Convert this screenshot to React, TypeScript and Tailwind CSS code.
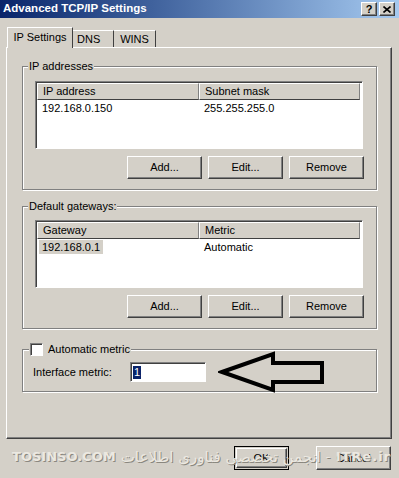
import React from "react";

const raised =
  "border border-t-white border-l-white border-r-[#404040] border-b-[#404040] shadow-[inset_-1px_-1px_0_#808080]";
const sunken =
  "border border-t-[#808080] border-l-[#808080] border-r-white border-b-white shadow-[inset_1px_1px_0_#404040]";
const etched = "border border-[#808080] shadow-[inset_1px_1px_0_#fff,1px_1px_0_#fff]";

type Row = { a: string; b: string; selected?: boolean };

function ListView({ cols, rows }: { cols: [string, string]; rows: Row[] }) {
  return (
    <div className={`h-[68px] bg-white flex flex-col ${sunken}`}>
      <div className="flex h-[17px] bg-[#d4d0c8] ml-[1px] mt-[1px] mr-[2px]">
        <div className="w-[162px] flex items-center pl-[5px] border-r border-b border-r-[#808080] border-b-[#404040] border-t border-l border-t-white border-l-white">
          {cols[0]}
        </div>
        <div className="flex-1 flex items-center pl-[5px] border-r border-b border-r-[#808080] border-b-[#404040] border-t border-l border-t-white border-l-white">
          {cols[1]}
        </div>
      </div>
      {rows.map((r) => (
        <div key={r.a} className="flex h-[16px] items-center ml-[1px]">
          <div className="w-[162px] pl-[2px]">
            <span className={`px-[3px] py-[1px] ${r.selected ? "bg-[#d4d0c8]" : ""}`}>{r.a}</span>
          </div>
          <div className="flex-1 pl-[5px]">{r.b}</div>
        </div>
      ))}
    </div>
  );
}

function Btn({ label, className = "" }: { label: string; className?: string }) {
  return (
    <div className={`w-[75px] h-[23px] flex items-center justify-center bg-[#d4d0c8] ${raised} ${className}`}>
      {label}
    </div>
  );
}

function GroupLabel({ children, className = "" }: { children: React.ReactNode; className?: string }) {
  return (
    <div className={`-mt-[7px] h-[13px] w-fit px-[1px] bg-[#d4d0c8] flex items-center leading-[13px] ${className}`}>
      {children}
    </div>
  );
}

export default function App() {
  return (
    <div className="w-[399px] h-[478px] bg-[#d4d0c8] flex flex-col overflow-hidden relative font-['Liberation_Sans',Arial,sans-serif] text-[11px] text-black">
      {/* title bar */}
      <div className="h-[18px] flex items-center justify-between pl-[3px] pr-[4px] bg-gradient-to-r from-[#0a246a] to-[#a6caf0]">
        <span className="text-white font-bold text-[11.5px]">Advanced TCP/IP Settings</span>
        <div className="flex gap-[2px]">
          <div className={`w-[16px] h-[14px] bg-[#d4d0c8] flex items-center justify-center font-bold text-[11px] ${raised}`}>?</div>
          <div className={`w-[16px] h-[14px] bg-[#d4d0c8] flex items-center justify-center ${raised}`}>
            <svg width="8" height="7" viewBox="0 0 8 7">
              <path d="M0.5 0.5 L7.5 6.5 M7.5 0.5 L0.5 6.5" stroke="black" strokeWidth="1.6" />
            </svg>
          </div>
        </div>
      </div>

      <div className="pl-[6px] mt-[9px]">
        {/* tabs */}
        <div className="flex items-end h-[20px] pl-[1px]">
          <div className="relative z-10 -mb-px w-[66px] h-[21px] bg-[#d4d0c8] border-t border-l border-r border-t-white border-l-white border-r-[#404040] flex items-center justify-center pb-[1px]">
            IP Settings
          </div>
          <div className="w-[41px] h-[17px] border-t border-r border-t-white border-r-[#404040] flex items-center pl-[4px]">
            DNS
          </div>
          <div className="w-[42px] h-[17px] border-t border-r border-t-white border-r-[#404040] flex items-center justify-center">
            WINS
          </div>
        </div>

        {/* panel */}
        <div className="w-[386px] h-[392px] pl-[15px] pr-[14px] border border-t-white border-l-white border-r-[#404040] border-b-[#404040] shadow-[inset_-1px_-1px_0_#808080]">
          <div className={`mt-[18px] h-[124px] px-[12px] flex flex-col ${etched}`}>
            <GroupLabel className="-ml-[7px]">IP addresses</GroupLabel>
            <div className="mt-[8px] mr-[1px]">
              <ListView cols={["IP address", "Subnet mask"]} rows={[{ a: "192.168.0.150", b: "255.255.255.0" }]} />
            </div>
            <div className="mt-[7px] flex justify-end gap-[6px]">
              <Btn label="Add..." />
              <Btn label="Edit..." />
              <Btn label="Remove" />
            </div>
          </div>

          <div className={`mt-[16px] h-[123px] px-[12px] flex flex-col ${etched}`}>
            <GroupLabel className="-ml-[7px]">Default gateways:</GroupLabel>
            <div className="mt-[7px] mr-[1px]">
              <ListView cols={["Gateway", "Metric"]} rows={[{ a: "192.168.0.1", b: "Automatic", selected: true }]} />
            </div>
            <div className="mt-[7px] flex justify-end gap-[6px]">
              <Btn label="Add..." />
              <Btn label="Edit..." />
              <Btn label="Remove" />
            </div>
          </div>

          <div className={`mt-[20px] h-[43px] flex flex-col ${etched}`}>
            <GroupLabel className="ml-[6px]">
              <span className={`w-[13px] h-[13px] bg-white ${sunken}`} />
              <span className="ml-[5px]">Automatic metric</span>
            </GroupLabel>
            <div className="mt-[6px] flex items-center h-[20px] pl-[10px]">
              <span className="w-[97px]">Interface metric:</span>
              <div className={`w-[76px] h-[20px] bg-white flex items-center pl-[2px] ${sunken}`}>
                <span className="bg-[#0a246a] text-white px-[1px] leading-[13px]">1</span>
              </div>
              <svg width="108" height="42" viewBox="0 0 108 42" className="ml-[12px] -my-[11px] shrink-0">
                <polygon
                  points="4,21 55,3 55,12 104,12 104,31 55,31 55,39"
                  fill="none"
                  stroke="black"
                  strokeWidth="4"
                  strokeLinejoin="miter"
                />
              </svg>
            </div>
          </div>
        </div>

        {/* bottom buttons */}
        <div className="mt-[7px] flex justify-end pr-[8px] gap-[27px]">
          <div className="w-[55px] h-[24px] border border-black flex items-center justify-center bg-[#d4d0c8]">
            <div className={`w-[51px] h-[20px] flex items-center justify-center ${raised}`}>OK</div>
          </div>
          <Btn label="Cancel" className="w-[74px] h-[24px]" />
        </div>
      </div>

      {/* watermark */}
      <div
        dir="rtl"
        className="absolute left-[12px] right-[8px] top-[445px] h-[24px] flex items-center justify-between font-['DejaVu_Sans',sans-serif] text-[13px] text-[#ebe8e1] [text-shadow:1px_1px_0_#8a877f] whitespace-nowrap"
      >
        <span className="font-bold tracking-[1px]">ITRe.ir</span>
        <span>-</span>
        <span className="text-[15px]">انجمن تخصصی فناوری اطلاعات</span>
        <span dir="ltr" className="font-bold">TOSINSO.COM</span>
      </div>
    </div>
  );
}
